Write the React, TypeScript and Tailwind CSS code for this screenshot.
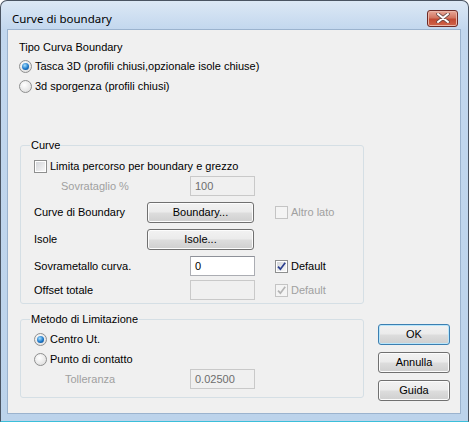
import type { ReactNode } from 'react'

function Radio({ checked }: { checked?: boolean }) {
  return (
    <span className="flex h-[13px] w-[13px] shrink-0 items-center justify-center rounded-full border border-[#8e8f8f] bg-[radial-gradient(circle_at_40%_35%,#ffffff,#d8d8d8)]">
      {checked && (
        <span className="h-[7px] w-[7px] rounded-full bg-[radial-gradient(circle_at_40%_35%,#a6e0ff,#1c78c9_55%,#0b3c78)]" />
      )}
    </span>
  )
}

function Check({ checked, disabled }: { checked?: boolean; disabled?: boolean }) {
  return (
    <span
      className={`flex h-[13px] w-[13px] shrink-0 items-center justify-center border ${
        disabled ? 'border-[#c4c4c4] bg-[#f4f4f4]' : 'border-[#8e8f8f] bg-white'
      }`}
    >
      <span
        className={`flex h-[9px] w-[9px] items-center justify-center ${
          disabled ? 'bg-[#f4f4f4]' : 'bg-[linear-gradient(135deg,#d4d6da,#f7f7f7)]'
        }`}
      >
        {checked && (
          <svg width="9" height="9" viewBox="0 0 9 9">
            <path
              d="M1 4.6 L3.4 7.2 L8.2 0.8"
              fill="none"
              stroke={disabled ? '#b4b4b4' : '#2b3f8f'}
              strokeWidth="1.7"
            />
          </svg>
        )}
      </span>
    </span>
  )
}

function Btn({ children, primary, className }: { children: ReactNode; primary?: boolean; className?: string }) {
  return (
    <button
      type="button"
      className={`flex h-[21px] items-center justify-center rounded-[3px] border bg-[linear-gradient(#f2f2f2_0%,#ebebeb_48%,#dddddd_52%,#cfcfcf_100%)] text-[11px] text-black ${
        primary
          ? 'border-[#3c7fb1] shadow-[inset_0_0_0_1px_#b9e6fb]'
          : 'border-[#707070] shadow-[inset_0_0_0_1px_#fcfcfc]'
      } ${className ?? ''}`}
    >
      {children}
    </button>
  )
}

function Field({ value, disabled }: { value?: string; disabled?: boolean }) {
  return (
    <div
      className={`flex h-[20px] w-[65px] shrink-0 items-center border px-[4px] text-[11px] ${
        disabled
          ? 'border-[#c9c9c9] bg-[#f0f0f0] text-[#6d6d6d]'
          : 'border-[#abadb3] border-t-[#8e9199] bg-white text-black'
      }`}
    >
      {value}
    </div>
  )
}

export default function App() {
  return (
    <div className="h-[422px] w-[469px] bg-white font-['Liberation_Sans',Tahoma,sans-serif] text-[11px] leading-[13px] text-black">
      <div className="flex h-[422px] w-[469px] flex-col rounded-t-[7px] border border-[#4a5462] border-b-[#3bbfda] bg-[linear-gradient(#dce8f5,#c2d7ee_29px,#bcd3eb)] px-[6px] pb-[7px] pr-[7px]">
        <div className="flex h-[28px] shrink-0 items-center pt-[6px]">
          <span className="ml-[5px] font-['Noto_Sans',sans-serif] text-[11.5px] text-black">Curve di boundary</span>
          <span className="ml-auto mr-[3px] flex h-[17px] w-[31px] items-center justify-center rounded-[3px] border border-[#6e2b27] bg-[linear-gradient(#e9a898,#d27560_45%,#c24a33_55%,#d0644a)] shadow-[inset_0_0_0_1px_#eab4a6]">
            <svg width="14" height="10" viewBox="0 0 14 10">
              <path d="M2 1 L12 9 M12 1 L2 9" stroke="#6b4a48" strokeWidth="3.6" strokeLinecap="round" />
              <path d="M2 1 L12 9 M12 1 L2 9" stroke="#ffffff" strokeWidth="2" strokeLinecap="round" />
            </svg>
          </span>
        </div>

        <div className="flex flex-1 flex-col border border-[#9bb3ce] bg-[#f0f0f0] pl-[11px] pt-[11px]">
          <div>Tipo Curva Boundary</div>
          <div className="mt-[2px] flex h-[20px] items-center gap-[3px]">
            <Radio checked />
            <span>Tasca 3D (profili chiusi,opzionale isole chiuse)</span>
          </div>
          <div className="flex h-[20px] items-center gap-[3px]">
            <Radio />
            <span>3d sporgenza (profili chiusi)</span>
          </div>

          <fieldset className="ml-[1px] mt-[43px] w-[344px] rounded-[3px] border border-[#d5dfe5] pb-[3px] pl-[13px] pt-[4px]">
            <legend className="ml-[-4px] px-[1px]">Curve</legend>
            <div className="flex h-[20px] items-center gap-[3px]">
              <Check />
              <span>Limita percorso per boundary e grezzo</span>
            </div>
            <div className="flex h-[20px] items-center">
              <span className="ml-[27px] w-[129px] text-[#a0a0a0]">Sovrataglio %</span>
              <Field value="100" disabled />
            </div>
            <div className="mt-[6px] flex h-[21px] items-center">
              <span className="w-[113px]">Curve di Boundary</span>
              <Btn className="w-[107px]">Boundary...</Btn>
              <span className="ml-[21px] flex items-center gap-[3px] text-[#a0a0a0]">
                <Check disabled />
                Altro lato
              </span>
            </div>
            <div className="mt-[6px] flex h-[21px] items-center">
              <span className="w-[113px]">Isole</span>
              <Btn className="w-[107px]">Isole...</Btn>
            </div>
            <div className="mt-[6px] flex h-[20px] items-center">
              <span className="w-[156px]">Sovrametallo curva.</span>
              <Field value="0" />
              <span className="ml-[20px] flex items-center gap-[3px]">
                <Check checked />
                Default
              </span>
            </div>
            <div className="mt-[4px] flex h-[20px] items-center">
              <span className="w-[156px]">Offset totale</span>
              <Field disabled />
              <span className="ml-[20px] flex items-center gap-[3px] text-[#a0a0a0]">
                <Check checked disabled />
                Default
              </span>
            </div>
          </fieldset>

          <div className="mt-[9px] flex items-start">
            <fieldset className="ml-[1px] w-[344px] rounded-[3px] border border-[#d5dfe5] pb-[8px] pl-[13px] pt-[3px]">
              <legend className="ml-[-4px] px-[1px]">Metodo di Limitazione</legend>
              <div className="flex h-[20px] items-center gap-[3px]">
                <Radio checked />
                <span>Centro Ut.</span>
              </div>
              <div className="flex h-[20px] items-center gap-[3px]">
                <Radio />
                <span>Punto di contatto</span>
              </div>
              <div className="flex h-[20px] items-center">
                <span className="ml-[31px] w-[125px] text-[#a0a0a0]">Tolleranza</span>
                <Field value="0.02500" disabled />
              </div>
            </fieldset>
            <div className="ml-[14px] mt-[11px] flex flex-col gap-[7px]">
              <Btn primary className="w-[72px]">OK</Btn>
              <Btn className="w-[72px]">Annulla</Btn>
              <Btn className="w-[72px]">Guida</Btn>
            </div>
          </div>
        </div>
      </div>
    </div>
  )
}
